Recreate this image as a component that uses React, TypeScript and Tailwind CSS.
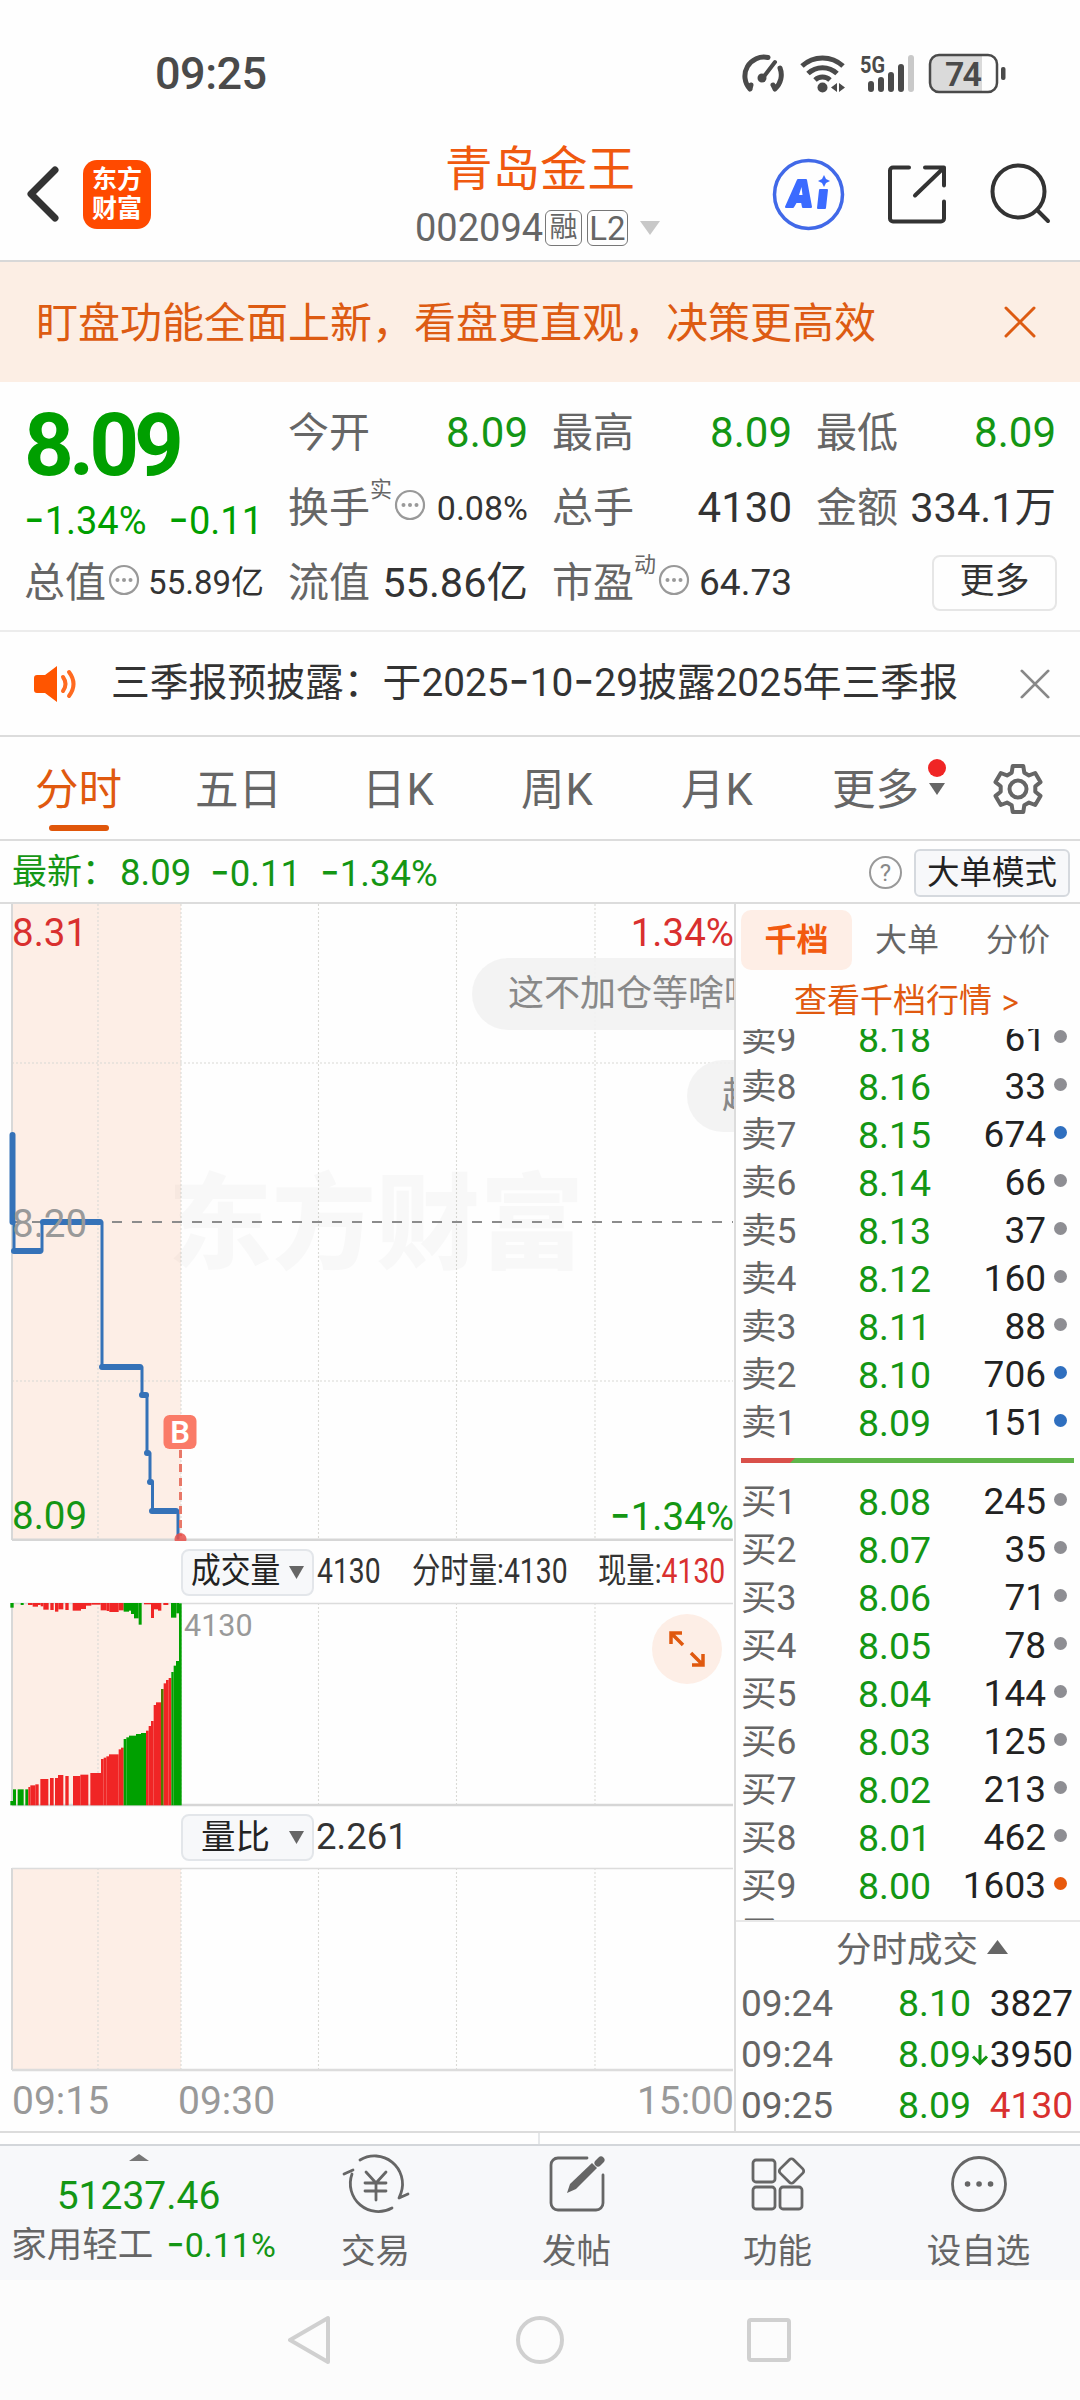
import React from 'react';

// Hyphens get a wider face than the digits around them
const Num: React.FC<{ children: string; className?: string }> = ({ children, className }) => (
    <span className={className}>
        {children.split(/(-)/).map((part, i) =>
            part === '-' ? <span key={i} className="font-[Inter] text-[1.18em] leading-none">-</span> : part
        )}
    </span>
);

const VERTICALS = [98, 181, 318.5, 456.5, 595];

const ASKS = [
    { label: '卖9', price: '8.18', qty: 61, dot: 'gray' },
    { label: '卖8', price: '8.16', qty: 33, dot: 'gray' },
    { label: '卖7', price: '8.15', qty: 674, dot: 'blue' },
    { label: '卖6', price: '8.14', qty: 66, dot: 'gray' },
    { label: '卖5', price: '8.13', qty: 37, dot: 'gray' },
    { label: '卖4', price: '8.12', qty: 160, dot: 'gray' },
    { label: '卖3', price: '8.11', qty: 88, dot: 'gray' },
    { label: '卖2', price: '8.10', qty: 706, dot: 'blue' },
    { label: '卖1', price: '8.09', qty: 151, dot: 'blue' },
];

const BIDS = [
    { label: '买1', price: '8.08', qty: 245, dot: 'gray' },
    { label: '买2', price: '8.07', qty: 35, dot: 'gray' },
    { label: '买3', price: '8.06', qty: 71, dot: 'gray' },
    { label: '买4', price: '8.05', qty: 78, dot: 'gray' },
    { label: '买5', price: '8.04', qty: 144, dot: 'gray' },
    { label: '买6', price: '8.03', qty: 125, dot: 'gray' },
    { label: '买7', price: '8.02', qty: 213, dot: 'gray' },
    { label: '买8', price: '8.01', qty: 462, dot: 'gray' },
    { label: '买9', price: '8.00', qty: 1603, dot: 'orange' },
    { label: '买10', price: '7.99', qty: 201, dot: 'gray' },
];

const DOTS: Record<string, string> = {
    gray: 'bg-[#8e8e93]',
    blue: 'bg-[#2f6fbf]',
    orange: 'bg-[#e8590c]',
};

const TRADES = [
    { time: '09:24', price: '8.10', arrow: false, qty: '3827', color: 'text-[#222]' },
    { time: '09:24', price: '8.09', arrow: true, qty: '3950', color: 'text-[#222]' },
    { time: '09:25', price: '8.09', arrow: false, qty: '4130', color: 'text-[#d9302f]' },
];

// Auction bars in thirds of a pixel: [from, to, top, color]
const MATCHED: [number, number, number, string][] = [
    [31, 39, 783, 'g'], [39, 48, 748, 'g'], [53, 71, 748, 'g'], [76, 85, 748, 'g'], [85, 91, 741, 'r'],
    [91, 106, 736, 'r'], [106, 116, 733, 'r'], [121, 145, 717, 'r'], [150, 161, 714, 'r'], [165, 174, 714, 'r'],
    [174, 190, 705, 'r'], [196, 206, 708, 'r'], [219, 241, 708, 'r'], [241, 265, 704, 'r'], [271, 303, 699, 'r'],
    [303, 311, 657, 'r'], [311, 319, 653, 'r'], [319, 327, 649, 'r'], [327, 356, 643, 'r'], [356, 363, 628, 'r'],
    [363, 371, 623, 'r'], [371, 379, 597, 'g'], [379, 387, 592, 'g'], [387, 408, 587, 'g'], [408, 423, 582, 'g'],
    [423, 438, 579, 'g'], [438, 446, 572, 'r'], [446, 453, 558, 'r'], [453, 461, 543, 'r'], [461, 468, 495, 'r'],
    [468, 483, 487, 'r'], [483, 491, 447, 'd'], [491, 498, 430, 'r'], [498, 506, 420, 'r'], [506, 514, 414, 'r'],
    [514, 521, 396, 'g'], [521, 528, 377, 'g'], [528, 537, 363, 'g'], [537, 545, 190, 'g'],
];

const UNMATCHED: [number, number, number, string][] = [
    [31, 41, 203, 'g'], [62, 71, 195, 'g'], [84, 98, 195, 'r'], [98, 114, 200, 'r'], [114, 122, 195, 'r'],
    [122, 130, 199, 'r'], [130, 146, 209, 'r'], [151, 161, 210, 'r'], [165, 175, 215, 'r'], [175, 190, 208, 'r'],
    [196, 206, 210, 'r'], [218, 243, 212, 'r'], [243, 258, 207, 'r'], [258, 274, 197, 'r'], [274, 302, 194, 'r'],
    [302, 320, 211, 'r'], [320, 328, 213, 'r'], [328, 356, 216, 'r'], [356, 371, 211, 'r'], [371, 387, 215, 'g'],
    [387, 393, 212, 'g'], [393, 402, 222, 'g'], [402, 416, 235, 'g'], [416, 425, 254, 'g'], [432, 453, 193, 'r'],
    [453, 462, 234, 'r'], [462, 474, 208, 'r'], [474, 484, 212, 'r'], [490, 505, 195, 'r'], [513, 529, 233, 'g'],
    [529, 537, 220, 'g'],
];

const BAR_COLORS: Record<string, string> = { g: '#00a000', r: '#f02525', d: '#4d7d00' };

const gearPath = () => {
    const pts: string[] = [];
    for (let k = 0; k < 6; k++) {
        const base = k * 60 - 90;
        const corners: [number, number][] = [[-21, 17.5], [-13, 23.5], [13, 23.5], [21, 17.5]];
        corners.forEach(([deg, r]) => {
            const a = ((base + deg) * Math.PI) / 180;
            pts.push(`${(26 + r * Math.cos(a)).toFixed(1)} ${(26 + r * Math.sin(a)).toFixed(1)}`);
        });
    }
    return `M${pts.join('L')}Z`;
};

const Cross: React.FC<{ size: number; color: string }> = ({ size, color }) => (
    <svg width={size} height={size} viewBox="0 0 32 32" stroke={color} strokeWidth="3" strokeLinecap="round">
        <path d="M2 2L30 30M30 2L2 30" />
    </svg>
);

const MoreDots: React.FC = () => (
    <svg width="32" height="32" viewBox="0 0 32 32" className="shrink-0 ml-[2px] mb-[6px]">
        <circle cx="16" cy="16" r="14" fill="none" stroke="#999" strokeWidth="2.200" />
        <circle cx="9.5" cy="16" r="2" fill="#999" />
        <circle cx="16" cy="16" r="2" fill="#999" />
        <circle cx="22.5" cy="16" r="2" fill="#999" />
    </svg>
);

const StatusBar: React.FC = () => (
    <div className="h-[128px] pt-[50px] pl-[155px] pr-[74px] flex items-start justify-between text-[#4a4a4a]">
        <span className="h-[48px] leading-[48px] text-[45px] font-medium tracking-[-0.5px]">09:25</span>
        <svg width="266" height="48" viewBox="740 51 266 48">
            <g fill="none" stroke="#4a4a4a" strokeWidth="5" strokeLinecap="round">
                <path d="M750 90A19 19 0 0 1 768 58.5M780 69A19 19 0 0 1 775 90M750 90l1-4M775 90l-2-4" />
                <path d="M762 80L775 63" strokeWidth="4" />
                <path d="M802 67A30 30 0 0 1 843 67M808 74.500A21 21 0 0 1 837 74.500M815 81A11 11 0 0 1 830 81" strokeLinecap="butt" />
            </g>
            <circle cx="762" cy="79" r="4.500" fill="#4a4a4a" />
            <circle cx="822.500" cy="88.500" r="5" fill="#4a4a4a" />
            <path d="M837 84v9l-6-4.500zM839 84v9l6-4.500z" fill="#4a4a4a" />
            <g fill="#4a4a4a">
                <rect x="868" y="82" width="6" height="11" rx="3" />
                <rect x="878" y="78" width="6" height="15" rx="3" />
                <rect x="888" y="73" width="6" height="20" rx="3" />
                <rect x="898" y="65" width="6" height="28" rx="3" />
                <rect x="908" y="56" width="6" height="37" rx="3" fill="#c9c9c9" />
            </g>
            <text x="860" y="74" fontSize="24" fontWeight="700" fill="#4a4a4a" textLength="25" lengthAdjust="spacingAndGlyphs">5G</text>
            <path d="M938 57h44v35h-44a8 8 0 0 1-8-8v-19a8 8 0 0 1 8-8z" fill="#dadada" />
            <rect x="930" y="56" width="67" height="37" rx="9" fill="none" stroke="#4a4a4a" strokeWidth="2.500" />
            <rect x="1001" y="68" width="4.500" height="13" rx="2" fill="#4a4a4a" />
            <text x="945" y="86.500" fontSize="34" fontWeight="600" fill="#4a4a4a" textLength="37">74</text>
        </svg>
    </div>
);

const Header: React.FC = () => (
    <div className="h-[134px] pb-[1px] border-b-2 border-[#d8d8d8] flex">
        <div className="w-[415px] pt-[32px] pl-[27px] flex items-start">
            <svg width="32" height="68" viewBox="0 0 32 68" fill="none" stroke="#333" strokeWidth="7" strokeLinecap="round" strokeLinejoin="round">
                <path d="M28 10L4 34L28 58" />
            </svg>
            <div className="ml-[24px] w-[68px] h-[69px] rounded-[14px] bg-[#ff4a00] text-white font-bold text-[25px] leading-[29px] text-center pt-[5px]">
                <div>东方</div>
                <div>财富</div>
            </div>
        </div>
        <div className="w-[250px] flex flex-col items-center">
            <div className="mt-[17px] h-[50px] leading-[50px] text-[47.500px] text-[#f0590f] whitespace-nowrap">青岛金王</div>
            <div className="mt-[15px] w-full flex items-center h-[36px] text-[#666]">
                <span className="text-[38px] leading-[36px] w-[130px]">002094</span>
                <span className="w-[37px] h-[36px] rounded-[6px] border border-[#777] text-[28px] leading-[33px] text-center">融</span>
                <span className="ml-[5px] w-[41px] h-[36px] rounded-[6px] border border-[#777] text-[33px] leading-[35px] text-center">L2</span>
                <svg className="ml-[11px] shrink-0" width="22" height="16" viewBox="0 0 22 16">
                    <path d="M1 1h20L11 15z" fill="#c8c8c8" />
                </svg>
            </div>
        </div>
        <svg className="ml-[100px]" width="290" height="120" viewBox="765 128 290 120" fill="none">
            <circle cx="808.500" cy="194.500" r="34" stroke="#4169e8" strokeWidth="3.500" />
            <g fill="#3b6bff">
                <path d="M798 180h8l5 27h-8l-1-5h-6l-3 5h-7z" stroke="#3b6bff" strokeWidth="2" strokeLinejoin="round" />
                <path d="M799 195l2.500-8 1 8z" fill="#fff" />
                <path d="M820 190h7l-2 18h-7z" stroke="#3b6bff" strokeWidth="2" strokeLinejoin="round" />
                <path d="M824 175l2 4 4 2-4 2-2 4-2-4-4-2 4-2z" />
            </g>
            <g stroke="#333" strokeWidth="4" strokeLinecap="round" strokeLinejoin="round">
                <path d="M909 167.500h-16a3 3 0 0 0-3 3v48a3 3 0 0 0 3 3h48a3 3 0 0 0 3-3v-17M925 167.500h19v18M942 169.500l-27 26" />
                <circle cx="1018.500" cy="191.500" r="26" />
                <path d="M1037 210l11 11" />
            </g>
        </svg>
    </div>
);

const Stat: React.FC<{ label: string; value: string; sup?: string; icon?: boolean; color?: string; size?: string }> = ({
    label, value, sup, icon, color = 'text-[#333]', size = 'text-[42px]',
}) => (
    <div className="flex items-center justify-between whitespace-nowrap leading-[50px]">
        <div className="flex items-center text-[41px] text-[#666]">
            {label}
            {sup && <span className="w-[22px] mb-[36px] text-[22px] leading-[22px]">{sup}</span>}
            {icon && <MoreDots />}
        </div>
        <span className={`${size} ${color}`}>{value}</span>
    </div>
);

const QuotePanel: React.FC = () => (
    <div className="h-[251px] pt-[14px] pl-[24px] border-b-2 border-[#ececec] grid grid-cols-[240px_240px_240px_240px] grid-rows-[75px_75px_75px] gap-x-[24px]">
        <div className="row-span-2 text-[#009f00]">
            <div className="mt-[9px] h-[80px] leading-[80px] text-[87px] font-bold tracking-[-5px]">8.09</div>
            <div className="mt-[11px] pr-[1px] flex justify-between text-[38px] leading-[42px] h-[42px] whitespace-nowrap">
                <Num>-1.34%</Num>
                <Num>-0.11</Num>
            </div>
        </div>
        <Stat label="今开" value="8.09" color="text-[#149614]" />
        <Stat label="最高" value="8.09" color="text-[#149614]" />
        <Stat label="最低" value="8.09" color="text-[#149614]" />
        <Stat label="换手" value="0.08%" sup="实" icon size="text-[34px]" />
        <Stat label="总手" value="4130" />
        <Stat label="金额" value="334.1万" size="text-[41.500px]" />
        <Stat label="总值" value="55.89亿" icon size="text-[33px]" />
        <Stat label="流值" value="55.86亿" size="text-[41.500px]" />
        <Stat label="市盈" value="64.73" sup="动" icon size="text-[37px]" />
        <div className="flex items-center justify-end">
            <div className="-mr-px w-[125px] h-[56px] rounded-[8px] border-2 border-[#e6e6e6] text-[35px] leading-[50px] text-center text-[#333]">更多</div>
        </div>
    </div>
);

const Notice: React.FC = () => (
    <div className="h-[105px] border-b-2 border-[#dcdcdc] pl-[33px] pr-[30px] flex items-center">
        <svg width="48" height="40" viewBox="0 0 48 40">
            <path d="M4 11h8L24 2v36L12 29H4a3 3 0 0 1-3-3V14a3 3 0 0 1 3-3z" fill="#ff5500" />
            <path d="M30 13q5 7 0 14M36 8q9 12 0 24" fill="none" stroke="#ff6a20" strokeWidth="4" strokeLinecap="round" />
        </svg>
        <Num className="ml-[30px] mb-[2px] text-[38.800px] leading-[60px] text-[#333] whitespace-nowrap">三季报预披露：于2025-10-29披露2025年三季报</Num>
        <div className="ml-auto"><Cross size={30} color="#888" /></div>
    </div>
);

const Tabs: React.FC = () => (
    <div className="h-[104px] border-b-2 border-[#dcdcdc] flex text-[43.500px] text-[#666] leading-[60px]">
        <div className="ml-[35px] w-[160px] pt-[24px] text-[#e0590f]">
            分时
            <div className="ml-[14px] mt-[4px] w-[60px] h-[6px] rounded-full bg-[#e0560a]" />
        </div>
        <div className="w-[167px] pt-[24px]">五日</div>
        <div className="w-[159px] pt-[24px] tracking-[1px]">日K</div>
        <div className="w-[160px] pt-[24px] tracking-[1px]">周K</div>
        <div className="w-[151px] pt-[24px] tracking-[1px]">月K</div>
        <div className="w-[95px] pt-[24px]">更多</div>
        <svg width="24" height="60" viewBox="0 0 24 60" className="mt-[17px]">
            <circle cx="10" cy="14" r="9" fill="#f02525" />
            <path d="M2 29h16l-8 12z" fill="#666" />
        </svg>
        <svg width="52" height="52" viewBox="0 0 52 52" className="ml-[41px] mt-[26px]" fill="none" stroke="#666" strokeWidth="4" strokeLinejoin="round">
            <path d={gearPath()} />
            <circle cx="26" cy="26" r="8.500" />
        </svg>
    </div>
);

const LatestRow: React.FC = () => (
    <div className="h-[63px] pt-[2px] border-b-2 border-[#dcdcdc] pl-[12px] pr-[10px] flex items-center text-[#149614] text-[36.500px] leading-[44px] whitespace-nowrap">
        <span className="w-[108px] text-[35px]">最新：</span>
        <Num className="w-[90px]">8.09</Num>
        <Num className="w-[110px]">-0.11</Num>
        <Num>-1.34%</Num>
        <div className="ml-auto w-[33px] h-[33px] rounded-full border-2 border-[#999] text-[#888] text-[24px] leading-[30px] text-center">?</div>
        <div className="ml-[12px] w-[156px] h-[48px] rounded-[6px] border-2 border-[#d5d9de] bg-[#f7f8fa] text-[#222] text-[32.500px] leading-[44px] text-center">大单模式</div>
    </div>
);

const Grid: React.FC<{ top: number; bottom: number }> = ({ top, bottom }) => (
    <>
        <rect x="12" y={top} width="169" height={bottom - top} fill="#fdeee6" />
        {VERTICALS.map(x => (
            <line key={x} x1={x} x2={x} y1={top} y2={bottom} stroke="#dadad6" strokeWidth="1.100" strokeDasharray="2 2" />
        ))}
        <line x1="12" x2="12" y1={top} y2={bottom} stroke="#d8d8d8" strokeWidth="2" />
    </>
);

const PriceChart: React.FC = () => (
    <div className="relative h-[637px] overflow-hidden text-[38.500px] leading-[40px]">
        <svg width="734" height="637" viewBox="0 904 734 637" className="block">
            <Grid top={904} bottom={1540} />
            <text x="168" y="1261" fontSize="104" fontWeight="900" fill="#000" fillOpacity="0.025">东方财富</text>
            <g stroke="#d8d8d4" strokeWidth="1.200" strokeDasharray="2 2">
                <path d="M12 1063H733M12 1381H733" />
            </g>
            <path d="M12 1222H733" stroke="#8c8c8c" strokeWidth="2" strokeDasharray="10 10" />
            <path d="M12 1540H733" stroke="#d6d6d6" strokeWidth="3" />
            <g fill="none" stroke="#3572b8" strokeLinecap="round" strokeLinejoin="round">
                <path d="M12.500 1135V1222" strokeWidth="6" />
                <path d="M14 1222V1251H42V1222H102V1367H142V1395H147V1453H150V1482H152.500V1511H178V1538" strokeWidth="3" />
                <path d="M14 1251H40M43 1222H100M102 1367H140M142 1395H146M147 1453h1M150 1482h1M152 1511H176" strokeWidth="6" />
            </g>
            <path d="M180.500 1450V1536" stroke="#e87868" strokeWidth="3" strokeDasharray="8 6" />
            <circle cx="180.500" cy="1539" r="6" fill="#e8504a" fillOpacity="0.850" />
            <rect x="163.500" y="1415" width="33" height="34" rx="6" fill="#fa7b68" />
            <text x="180" y="1443" fontSize="31" fontWeight="600" fill="#fff" textAnchor="middle">B</text>
        </svg>
        <span className="absolute left-[12px] top-[9px] text-[#d9302f]">8.31</span>
        <span className="absolute left-[12px] top-[300px] text-[#999]">8.20</span>
        <span className="absolute left-[12px] top-[592px] text-[#149614]">8.09</span>
        <span className="absolute right-0 top-[9px] text-[#d9302f]">1.34%</span>
        <span className="absolute right-0 top-[587px] text-[#149614] whitespace-nowrap"><Num>-1.34%</Num></span>
        <div className="absolute left-[472px] top-[54px] h-[72px] w-[360px] rounded-full bg-[#f2f2f2]/90 pl-[36px] text-[36px] leading-[72px] text-[#888] whitespace-nowrap">这不加仓等啥呢</div>
        <div className="absolute left-[687px] top-[156px] h-[72px] w-[200px] rounded-full bg-[#f2f2f2]/90 pl-[35px] text-[36px] leading-[72px] text-[#888] whitespace-nowrap">赶紧</div>
    </div>
);

const Selector: React.FC<{ label: string; squeeze?: boolean }> = ({ label, squeeze }) => (
    <div className="w-[133px] h-[47px] rounded-[8px] border-2 border-[#e3e6ea] bg-[#f7f8fa] flex items-center justify-between pl-[8px] pr-[8px] text-[#222]">
        <div className={squeeze ? 'w-[90px]' : 'w-[80px] ml-[10px]'}>
            <div className={squeeze ? 'w-max origin-left scale-x-[.85] text-[35px] leading-[40px]' : 'text-[34.500px] leading-[40px]'}>{label}</div>
        </div>
        <svg width="15" height="13" viewBox="0 0 15 13" className="shrink-0"><path d="M0 0h15L7.500 13z" fill="#666" /></svg>
    </div>
);

const VolumeChart: React.FC = () => (
    <div className="relative h-[205px]">
        <svg width="734" height="205" viewBox="0 1602 734 205" className="block">
            <Grid top={1603} bottom={1805} />
            <path d="M12 1603.500H733" stroke="#dcdcdc" strokeWidth="1.500" />
            <path d="M12 1805H733" stroke="#d6d6d6" strokeWidth="2.500" />
            {MATCHED.map(([a, b, y, c]) => (
                <rect key={a} x={a / 3} y={1540 + y / 3} width={(b - a) / 3} height={(796 - y) / 3} fill={BAR_COLORS[c]} />
            ))}
            {UNMATCHED.map(([a, b, y, c]) => (
                <rect key={a} x={a / 3} y={1603} width={(b - a) / 3} height={(y - 189) / 3} fill={BAR_COLORS[c]} />
            ))}
            <circle cx="687" cy="1649" r="35" fill="#fdeee6" />
            <path d="M683 1645l-12-12M671 1644v-11h11M691 1653l12 12M703 1654v11h-11" fill="none" stroke="#e0590f" strokeWidth="3.500" />
        </svg>
        <span className="absolute left-[184px] top-[8px] text-[30.500px] leading-[32px] text-[#999]">4130</span>
    </div>
);

const BookRow: React.FC<{ row: { label: string; price: string; qty: number; dot: string } }> = ({ row }) => (
    <div className="h-[48px] shrink-0 flex items-center pl-[5px] pr-[13px] leading-[48px] whitespace-nowrap">
        <span className="w-[117px] text-[35.500px] text-[#666]">{row.label}</span>
        <span className="w-[80px] text-[37.500px] text-[#149614]">{row.price}</span>
        <span className="ml-auto text-[37px] text-[#222]">{row.qty}</span>
        <span className={`ml-[8px] mb-[4px] w-[13px] h-[13px] rounded-full ${DOTS[row.dot]}`} />
    </div>
);

const OrderBook: React.FC = () => (
    <div className="w-[344px] flex flex-col">
        <div className="pt-[6px] pl-[5px] pr-[30px] flex items-center text-[32px] leading-[61px] text-[#666]">
            <div className="w-[111px] h-[60px] rounded-[10px] bg-[#feeee6] text-center font-bold text-[#f25a10]">千档</div>
            <span className="ml-[23px] h-[60px]">大单</span>
            <span className="ml-auto h-[60px]">分价</span>
        </div>
        <div className="pl-[58px] h-[59px] leading-[62px] text-[33px] text-[#e0590f] whitespace-nowrap">
            查看千档行情 <span className="font-[Inter] text-[30px]">&gt;</span>
        </div>
        <div className="h-[418px] overflow-hidden flex flex-col justify-end">
            {ASKS.map(row => <BookRow key={row.label} row={row} />)}
        </div>
        <div className="mt-[11px] ml-[5px] mr-[6px] h-[5px]">
            <svg width="333" height="5" viewBox="0 0 333 5" className="block">
                <rect width="333" height="5" fill="#5fb54a" />
                <path d="M0 0h54l-5 5H0z" fill="#d9504a" />
            </svg>
        </div>
        <div className="pt-[15px] h-[458px] overflow-hidden">
            {BIDS.map(row => <BookRow key={row.label} row={row} />)}
        </div>
        <div className="h-[58px] border-t-2 border-[#e8e8e8] flex items-center justify-center pl-[28px] text-[35.500px] text-[#666]">
            分时成交
            <svg className="ml-[9px] mb-[6px]" width="21" height="14" viewBox="0 0 21 14"><path d="M10.500 0L21 14H0z" fill="#666" /></svg>
        </div>
        {TRADES.map((t, i) => (
            <div key={i} className="h-[51px] flex items-center pl-[5px] pr-[7px] text-[37px] leading-[51px]">
                <span className="w-[157px] text-[#666]">{t.time}</span>
                <span className="text-[#149614] text-[37.500px]">{t.price}</span>
                {t.arrow && (
                    <svg width="18" height="24" viewBox="0 0 18 24" fill="none" stroke="#149614" strokeWidth="3">
                        <path d="M9 2V20M2 13.500l7 7 7-7" />
                    </svg>
                )}
                <span className={`ml-auto ${t.color}`}>{t.qty}</span>
            </div>
        ))}
    </div>
);

const ChartColumn: React.FC = () => (
    <div className="w-[736px] border-r-2 border-[#dcdcdc] flex flex-col">
        <PriceChart />
        <div className="h-[61px] pt-[1px] pl-[181px] flex items-center text-[#333]">
            <Selector label="成交量" squeeze />
            <div className="ml-[3px] w-[95px]"><div className="w-max origin-left scale-x-[.81] text-[35px]">4130</div></div>
            <div className="w-[186px]"><div className="w-max origin-left scale-x-[.81] text-[35px]">分时量:4130</div></div>
            <div className="w-[130px]"><div className="w-max origin-left scale-x-[.81] text-[35px]">现量:<span className="text-[#d9302f]">4130</span></div></div>
        </div>
        <VolumeChart />
        <div className="h-[60px] pl-[181px] flex items-center text-[#333]">
            <Selector label="量比" />
            <span className="ml-[2px] text-[36.500px]">2.261</span>
        </div>
        <svg width="734" height="205" viewBox="0 1867 734 205" className="block">
            <Grid top={1868} bottom={2070} />
            <path d="M12 1868.500H733" stroke="#dcdcdc" strokeWidth="1.500" />
            <path d="M12 2070H733" stroke="#dcdcdc" strokeWidth="2.500" />
        </svg>
        <div className="h-[59px] pl-[12px] flex items-center text-[39px] text-[#999]">
            <span className="w-[166px]">09:15</span>
            <span>09:30</span>
            <span className="ml-auto">15:00</span>
        </div>
    </div>
);

const ACTIONS = [
    { label: '交易', icon: (
        <>
            <path d="M16 8A28 28 0 0 1 57 41M57 41l-2 5 9-4M48 56A28 28 0 0 1 8 22M0 22l9-4" />
            <path d="M22 20l10 11 10-11M21 31h21M21 39h21M32 31v17" />
        </>
    ) },
    { label: '发帖', icon: (
        <>
            <path d="M42 6H13a7 7 0 0 0-7 7v38a7 7 0 0 0 7 7h38a7 7 0 0 0 7-7V23" />
            <path d="M22 41l3-9L47 11l5 5-21 21z" fill="#666" stroke="none" />
            <path d="M53 11l3-3" strokeWidth="7" />
        </>
    ) },
    { label: '功能', icon: (
        <>
            <rect x="7" y="8" width="22" height="22" rx="3" />
            <rect x="7" y="35" width="22" height="22" rx="3" />
            <rect x="34" y="35" width="22" height="22" rx="3" />
            <rect x="36" y="9.500" width="19" height="19" rx="3" transform="rotate(45 45.500 19)" />
        </>
    ) },
    { label: '设自选', icon: (
        <>
            <circle cx="32" cy="32" r="26.500" />
            <path d="M20.500 32h.1M32 32h.1M43.500 32h.1" strokeWidth="5.500" />
        </>
    ) },
];

const BottomBar: React.FC = () => (
    <div className="h-[136px] border-t-2 border-[#d3d6da] bg-[#f7f8fa] flex text-[#666]">
        <div className="w-[275px] pl-[2px] flex flex-col items-center">
            <svg className="mt-[8px]" width="20" height="7" viewBox="0 0 20 7"><path d="M10 0L20 7H0z" fill="#777" /></svg>
            <span className="mt-[14px] text-[39px] leading-[42px] text-[#149614]">51237.46</span>
            <div className="mt-[6px] ml-[10px] h-[44px] flex items-center text-[35.500px] leading-[44px] whitespace-nowrap">
                家用轻工<Num className="ml-[13px] text-[34px] text-[#149614]">-0.11%</Num>
            </div>
        </div>
        {ACTIONS.map(item => (
            <div key={item.label} className="w-[201px] shrink-0 flex flex-col items-center">
                <svg className="mt-[6px] overflow-visible" width="64" height="64" viewBox="0 0 64 64" fill="none" stroke="#666" strokeWidth="2.800" strokeLinecap="round" strokeLinejoin="round">
                    {item.icon}
                </svg>
                <span className="mt-[13px] text-[34.500px] leading-[44px]">{item.label}</span>
            </div>
        ))}
    </div>
);

const App: React.FC = () => (
    <div className="w-[1080px] h-[2400px] overflow-hidden bg-[#fefefe] font-[Roboto,'Noto_Sans_CJK_SC',sans-serif] flex flex-col">
        <StatusBar />
        <Header />
        <div className="h-[120px] bg-[#fceee4] pl-[36px] pr-[44px] flex items-center justify-between text-[42px] text-[#dd5b12]">
            <span className="pt-[3px] whitespace-nowrap">盯盘功能全面上新，看盘更直观，决策更高效</span>
            <Cross size={32} color="#dd5b12" />
        </div>
        <QuotePanel />
        <Notice />
        <Tabs />
        <LatestRow />
        <div className="h-[1227px] flex">
            <ChartColumn />
            <OrderBook />
        </div>
        <div className="h-[13px] border-t-2 border-[#dcdcdc] flex">
            <div className="w-[540px] border-r-2 border-[#e6e8ea]" />
        </div>
        <BottomBar />
        <div className="h-[120px] bg-[#fcfcfc] flex items-center justify-center">
            <svg width="504" height="60" viewBox="288 2310 504 60" fill="none" stroke="#d0d0d0" strokeWidth="4" strokeLinejoin="round">
                <path d="M290 2340L328 2318V2362z" />
                <circle cx="540" cy="2340" r="22" />
                <rect x="749" y="2320" width="40" height="40" rx="2" />
            </svg>
        </div>
    </div>
);

export default App;
